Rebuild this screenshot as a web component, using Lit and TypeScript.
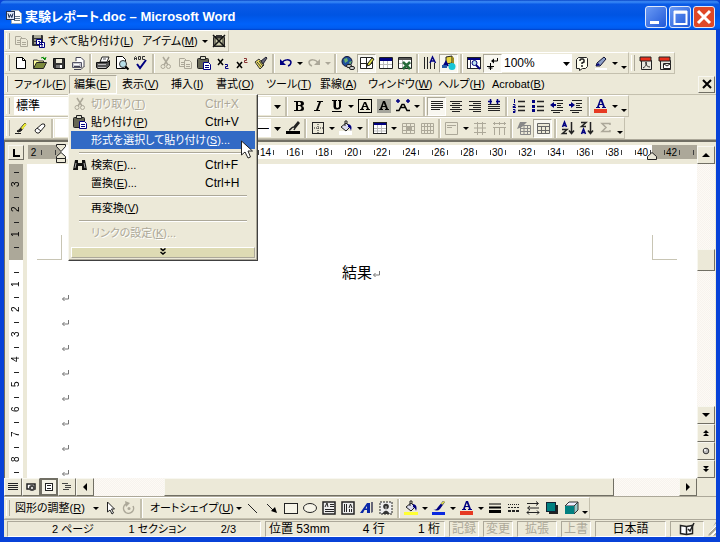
import { LitElement, html, css, svg, nothing, TemplateResult } from "lit";
import { customElement, property } from "lit/decorators.js";
import { classMap } from "lit/directives/class-map.js";
import { styleMap } from "lit/directives/style-map.js";

const G = "#aca899";
const N = "#000080";

/* Glyphs on a 16 x 16 grid */
const icons: Record<string, TemplateResult> = {
  blank: svg``,
  arrow: svg`<path d="M5 7h6l-3 3z" fill="#000"/>`,
  more: svg`<path d="M5 11h6l-3 3z" fill="#000"/>`,
  arrowoff: svg`<path d="M5 7h6l-3 3z" fill="${G}"/>`,
  copy: svg`<g fill="#ece9d8" stroke="${G}"><path d="M2.500 3.500h5l2 2v6h-7z"/><path d="M7.500 5.500h5l2 2v6h-7z"/><path d="M9 9.500h4M9 11.500h4M4 7.500h3M4 9.500h3"/></g>`,
  pasteall: svg`<rect x="2" y="2" width="11" height="11" rx="1" fill="#333"/><path d="M4 2h7v3h-7z" fill="#aa9"/><path d="M4 6h3v2h-3zM4 9h2v2h-2z" fill="#998"/><path d="M6.500 6.500h5v5h-5zM9.500 9.500h5v5h-5z" fill="#fff" stroke="${N}"/><path d="M8 8.500h2M11 11.500h2M11 13h2" stroke="${N}"/>`,
  clear: svg`<rect x="2.500" y="3.500" width="11" height="10" rx="1" fill="#776" stroke="#222"/><path d="M5 2h6v3h-6z" fill="#333"/><rect x="5" y="6" width="6" height="6" fill="#cca"/><path d="M2 2l12 12M14 2l-12 12" stroke="#111" stroke-width="1.500"/>`,
  neu: svg`<path d="M3.500 2.500h6l3 3v8h-9z" fill="#fff" stroke="#000"/><path d="M9.500 2.500v3h3" fill="none" stroke="#000"/>`,
  open: svg`<path d="M1.500 13v-8h4l1 1h5v2" fill="#ffff9c" stroke="#333"/><path d="M1.500 13.500l3-6h10l-3 6z" fill="#7c8a3c" stroke="#222"/><path d="M9 3q3-2 4 1m-2-1l2 2 1-3" fill="none" stroke="#080"/>`,
  save: svg`<path d="M2.500 3.500h11v10h-10l-1-1z" fill="#333" stroke="#111"/><rect x="5" y="4" width="6" height="4" fill="#ece9d8"/><rect x="5" y="10" width="6" height="3" fill="#777"/><rect x="9" y="10" width="2" height="3" fill="#fff"/>`,
  aprint: svg`<path d="M6 6V2.500h5l3 3V12" fill="#fff" stroke="#445"/><path d="M2.500 7.500h9v5h-9z" fill="#c9c9d2" stroke="#556"/><path d="M4 11.500h6M4 14.500h7l3-3" stroke="#445" fill="none"/><path d="M4 9.500h5" stroke="#fff"/>`,
  print: svg`<path d="M5 7l2-5h7l-2 5z" fill="#fff" stroke="#222"/><path d="M1.500 7.500h11l2-2v5l-3 3h-9l-1-1z" fill="#555" stroke="#111"/><path d="M3 9.500h8M3 12.500h8" stroke="#bbb"/><path d="M8 4h3" stroke="#555"/>`,
  preview: svg`<path d="M2.500 1.500h6l3 3v9h-9z" fill="#fff" stroke="#000"/><circle cx="9" cy="9" r="3.500" fill="#b8dfe8" stroke="#333"/><path d="M11.500 11.500l3 3" stroke="#000" stroke-width="2"/>`,
  spell: svg`<path d="M1.500 5V2.500l1-1 1 1V5M1.500 3.500h2M5.500 1.500v3h2v-3zM12 1.500H9.500v3H12" fill="none" stroke="#333"/><path d="M4 9l3 4 6-8" fill="none" stroke="${N}" stroke-width="2"/>`,
  cut: svg`<path d="M5 2l5 8M11 2l-5 8" stroke="${G}" stroke-width="1.500"/><circle cx="5" cy="11.500" r="2" fill="none" stroke="${G}"/><circle cx="10.500" cy="11.500" r="2" fill="none" stroke="${G}"/>`,
  paste: svg`<rect x="1.500" y="3.500" width="11" height="10" rx="1" fill="#665" stroke="#222"/><path d="M4.500 1.500h5v3h-5z" fill="#ddc" stroke="#222"/><path d="M7.500 7.500h5l2 2v5h-7z" fill="#fff" stroke="${N}"/><path d="M9 10.500h4M9 12.500h4" stroke="${N}"/>`,
  sub: svg`<path d="M3 4l5 6M8 4l-5 6" stroke="#000" stroke-width="1.500"/><path d="M10 9.500h2.500v2h-2v2h3" fill="none" stroke="${N}"/>`,
  sup: svg`<path d="M3 7l5 6M8 7l-5 6" stroke="#000" stroke-width="1.500"/><path d="M10 3.500h2.500v2h-2v2h3" fill="none" stroke="#833"/>`,
  brush: svg`<path d="M2 7l4-3 5 6-4 4z" fill="#eee060" stroke="#333"/><path d="M4 7l5 6M6 6l4 5" stroke="#333"/><path d="M8 6l5-4 1 1-4 6z" fill="#667" stroke="#223"/>`,
  undo: svg`<path d="M4 8C6 4 12 4 13 7q0 3-3 4" fill="none" stroke="${N}" stroke-width="1.500"/><path d="M2 4v6h6z" fill="${N}"/>`,
  redo: svg`<path d="M12 8C10 4 4 4 3 7q0 3 3 4" fill="none" stroke="${G}" stroke-width="1.500"/><path d="M14 4v6H8z" fill="${G}"/>`,
  link: svg`<circle cx="7" cy="6.500" r="5" fill="#1f4f9c" stroke="#113"/><path d="M4 4l3-1 1 3-3 2zM9 7l3-1-2 4z" fill="#6db46d"/><rect x="6.500" y="9.500" width="5" height="3" rx="1.500" fill="#ccc" stroke="#222"/><rect x="9.500" y="11.500" width="5" height="3" rx="1.500" fill="#ccc" stroke="#222"/>`,
  tables: svg`<path d="M1.500 2.500h12v11h-12zM7.500 2.500v11M1.500 8.500h12" fill="#fff" stroke="#222"/><path d="M8 11l1-3 4-5 2 1-4 6z" fill="#dd4" stroke="#222"/>`,
  instable: svg`<path d="M1.500 2.500h13v11h-13z" fill="#fff" stroke="#222"/><path d="M2 3h12v3h-12z" fill="${N}"/><path d="M5.500 6v7M9.500 6v7M2 9.500h12" stroke="#bbb"/>`,
  excel: svg`<path d="M1.500 2.500h13v11h-13z" fill="#fff" stroke="#222"/><path d="M2 3h12v2h-12z" fill="#555"/><path d="M5.500 5v8M2 8.500h12" stroke="#bbb"/><path d="M6 7l7 7M13 7l-7 7" stroke="#276b3a" stroke-width="2.500"/>`,
  columns: svg`<path d="M2.500 2v12M5.500 2v12M8.500 8v6M12.500 8v6" stroke="#222"/><path d="M8 8l2.500-6 3 6M9 6h4" fill="none" stroke="${N}" stroke-width="1.500"/>`,
  drawing: svg`<path d="M5 2l6-1v7l-6 1z" fill="#e8d640" stroke="#222"/><path d="M11 1l2 2v7l-2-2z" fill="#998a20"/><path d="M1 12l4-7 3 6z" fill="${N}"/><rect x="1" y="10" width="5" height="3" fill="#265aa8"/><circle cx="11" cy="11.500" r="3.500" fill="#16c6d6"/>`,
  docmap: svg`<rect x="1.500" y="2.500" width="13" height="11" fill="#fff" stroke="#222"/><rect x="2" y="3" width="12" height="2" fill="${N}"/><path d="M4.500 5v8" stroke="#336"/><circle cx="8.500" cy="8" r="2.500" fill="#bfe3ee" stroke="${N}"/><path d="M10 10l4 4" stroke="${N}" stroke-width="2"/>`,
  para: svg`<path d="M12.500 3v3h-5" fill="none" stroke="#000"/><path d="M9 3.500v5L6 6z" fill="#000"/><path d="M5.500 8v7M2 11.500h7M3.500 13h4" stroke="#000"/>`,
  help: svg`<path d="M2.500 4.500l2-2h8l1 1v8l-2 2h-3l-3 2v-2h-3z" fill="#fffff0" stroke="#222"/><path d="M6 6V5l1-1h2l1 1v2L8 8v1M8 10v2" fill="none" stroke="#222" stroke-width="1.500"/>`,
  pen: svg`<path d="M2 13h12v2h-12z" fill="#fff"/><path d="M3 11l1-3 7-6 2 2-6 7z" fill="#8ca0c8" stroke="#113"/><path d="M3 11l2-3 2 2z" fill="${N}"/>`,
  pdf: svg`<path d="M3.500 5.500h10v9h-10z" fill="#e8e8e0" stroke="#222"/><path d="M2 2h11v4h-11z" fill="#e8301c" stroke="#222"/><path d="M5 13c4-2 4-6 3-6s0 5 4 5" fill="none" stroke="#222"/>`,
  pdfmail: svg`<path d="M3.500 5.500h10v9h-10z" fill="#e8e8e0" stroke="#222"/><path d="M2 2h11v4h-11z" fill="#e8301c" stroke="#222"/><path d="M6.500 8.500h7v5h-7zM7 9l3 2 3-2" fill="#fff" stroke="#222"/>`,
  bold: svg`<path fill-rule="evenodd" d="M3 3h7q3 0 3 3 0 1-2 2 2 0 2 2.500Q13 13 10 13H3v-1h2V4H3zM7 4v3h2q2-1 0-3zM7 8v4h2q3-2 0-4z" fill="#000"/>`,
  italic: svg`<path d="M7 3h6v1h-2l-3 8h2v1H4v-1h2l3-8H7z" fill="#000"/>`,
  underline: svg`<path d="M3 2h5v1H7v6q1 2 3 0V3H9V2h4v1h-1v6q-1 3-4 2.500Q5 12 4.500 9V3H3zM3 13h10v1H3z" fill="#000"/>`,
  boxa: svg`<rect x="1.500" y="1.500" width="13" height="13" fill="none" stroke="#000"/><path fill-rule="evenodd" d="M7 4h2l3 7h1v1H9v-1h1l-.6-2H6.400L6 11h1v1H3v-1h1zM7.800 5.500L6.700 8h2.300z" fill="#000"/>`,
  shadea: svg`<rect x="1" y="1" width="14" height="14" fill="#a5a59c"/><path fill-rule="evenodd" d="M7 3h2l3 8h1v1H9v-1h1l-.6-2H6.400L6 11h1v1H3v-1h1zM7.800 5L6.700 8h2.300z" fill="#000"/>`,
  scalea: svg`<path d="M1 12.500h3l3-6h2l3 6h3M5 9.500h6" fill="none" stroke="#000" stroke-width="1.500"/><path d="M1 3h4M3 1v4M11 3h4M13 1v4" stroke="${N}" stroke-width="1.500"/>`,
  left: svg`<path d="M2 3.500h12M2 5.500h12M2 7.500h12M2 9.500h12M2 11.500h9" stroke="#222"/>`,
  center: svg`<path d="M2 3.500h12M4 5.500h8M2 7.500h12M4 9.500h8M2 11.500h12M4 13.500h8" stroke="#222"/>`,
  right: svg`<path d="M2 3.500h12M6 5.500h8M2 7.500h12M6 9.500h8M2 11.500h12M6 13.500h8" stroke="#222"/>`,
  distribute: svg`<path d="M2 6.500h12M2 8.500h12M2 10.500h12M2 12.500h12" stroke="#222"/><path d="M2 3.500h4M10 3.500h4M4.500 1v5M11.500 1v5" stroke="${N}" stroke-width="1.500"/>`,
  numlist: svg`<path d="M7 3.500h7M7 8.500h7M7 12.500h7" stroke="#222" stroke-width="1.500"/><path d="M3.500 1v4M2 6.500h2v2h-2v1h3M2 11.500h2v3h-2M2 13.500h2" fill="none" stroke="${N}"/>`,
  bullets: svg`<path d="M7 3.500h7M7 8.500h7M7 12.500h7" stroke="#222" stroke-width="1.500"/><path d="M2 2h3v3H2zM2 7h3v3H2zM2 11h3v3H2z" fill="${N}"/>`,
  outdent: svg`<path d="M4 2.500h10M8 5.500h6M8 7.500h4M8 9.500h6M2 12.500h12M4 14.500h7" stroke="#222"/><path d="M1 7l4-3v2h2v2H5v2z" fill="${N}"/>`,
  indent: svg`<path d="M4 2.500h10M8 5.500h6M8 7.500h4M8 9.500h6M2 12.500h12M4 14.500h7" stroke="#222"/><path d="M7 7L3 4v2H1v2h2v2z" fill="${N}"/>`,
  fontcolor: svg`<rect x="1" y="11" width="13" height="4" fill="#e63a22"/><path fill-rule="evenodd" d="M7 1h2l3 8h1v1H9V9h1l-.6-2H6.400L6 9h1v1H3V9h1zM7.800 3L6.700 6h2.300z" fill="${N}"/>`,
  pencil: svg`<path d="M2 13.500h6M4 11l2-1 6-7 1 1-5 7-3 1z" fill="#222" stroke="#222"/><path d="M8 8l4-5 1.500 1.500-4 5z" fill="#ee3"/>`,
  eraser: svg`<path d="M3 10l7-6q3-1 3 2l-6 7H5q-2-1-2-3zM5 8l4 3" fill="#fff" stroke="#222"/>`,
  pencolor: svg`<rect x="1" y="11" width="14" height="3" fill="#000"/><path d="M4 10c2 0 2-3 5-3l4-5 1 1-4 5-1 2" fill="none" stroke="#222" stroke-width="1.500"/>`,
  borders: svg`<rect x="2.500" y="2.500" width="11" height="11" fill="none" stroke="#222"/><path d="M8 4v9M4 8h9" stroke="#222" stroke-dasharray="1 1"/>`,
  fill: svg`<rect x="1" y="11" width="13" height="4" fill="#fff"/><path d="M3 7l5-4 4 4-4 4z" fill="#dde" stroke="#222"/><path d="M7 6V1h2v3" fill="none" stroke="#222"/><path d="M10 4q5 1 3 7-1-4-3-4z" fill="${N}"/>`,
  fillyel: svg`<rect x="1" y="12" width="14" height="3" fill="#ff3"/><path d="M3 7l5-4 4 4-4 4z" fill="#dde" stroke="#222"/><path d="M7 6V1h2v3" fill="none" stroke="#222"/><path d="M10 4q5 1 3 7-1-4-3-4z" fill="${N}"/>`,
  linecolor: svg`<rect x="1" y="12" width="13" height="3" fill="#0a28e0"/><path d="M2 9q3 2 5-2l5-6 2 1-5 7q-3 3-7 0z" fill="${N}"/><path d="M10 3l3-2 1 1-3 3z" fill="#dd4"/>`,
  table: svg`<rect x="1.500" y="2.500" width="13" height="11" fill="#fff" stroke="#222"/><rect x="2" y="3" width="12" height="2" fill="${N}"/><path d="M5.500 5v8M9.500 5v8M2 8.500h12M2 11h12" stroke="#bbb"/>`,
  merge: svg`<path d="M2.500 3.500h12v10h-12zM6.500 3.500v10M10.500 3.500v10M2.500 6.500h12M2.500 10.500h12" fill="none" stroke="${G}"/><rect x="6" y="6" width="6" height="5" fill="${G}"/>`,
  split: svg`<path d="M2.500 3.500h12v10h-12zM5.500 3.500v10M8.500 3.500v10M11.500 3.500v10M2.500 6.500h12M2.500 10.500h12" fill="none" stroke="${G}"/>`,
  cellalign: svg`<path d="M1.500 2.500h12v12h-12zM3 5.500h9M3 7.500h5" fill="none" stroke="${G}"/>`,
  rows: svg`<path d="M2 3.500h12M2 12.500h12M5.500 2v13M10.500 2v13M2 8h12" stroke="${G}"/>`,
  cols: svg`<path d="M3.500 2v3M8.500 2v3M13.500 2v3M2 7.500h13M3.500 7v8M8.500 7v8M13.500 7v8M2 3.500h13" stroke="${G}"/>`,
  autofmt: svg`<path d="M4.500 5.500h10v9h-10zM4.500 8.500h10M4.500 11.500h10M8 5.500v9M11.500 5.500v9" fill="none" stroke="#888"/><path d="M1 9l3-7h7l-5 5z" fill="#888"/>`,
  grid: svg`<path d="M2.500 3.500h12v10h-12zM2.500 6.500h12M2.500 10.500h12M6.500 6.500v7M10.500 6.500v7" fill="#ece9d8" stroke="#666"/>`,
  az: svg`<path d="M2.500 7l2-5 2 5M3 5.500h3" fill="none" stroke="${N}" stroke-width="1.500"/><path d="M2 9.500h5l-4.500 4H7" fill="none" stroke="#222" stroke-width="1.500"/><path d="M11.500 2v11M9 10.500l2.500 3 2.500-3" fill="none" stroke="#222" stroke-width="1.500"/>`,
  za: svg`<path d="M2.500 14l2-5 2 5M3 12.500h3" fill="none" stroke="${N}" stroke-width="1.500"/><path d="M2 2.500h5l-4.500 4H7" fill="none" stroke="#222" stroke-width="1.500"/><path d="M11.500 2v11M9 10.500l2.500 3 2.500-3" fill="none" stroke="#222" stroke-width="1.500"/>`,
  sum: svg`<path d="M12 5V3.500H4l4 4-4 4h8V10" fill="none" stroke="${G}" stroke-width="1.500"/>`,
  pointer: svg`<path d="M5.500 2v10l2.500-2 2 4 1.500-1-2-4h3z" fill="#fff" stroke="#222"/>`,
  rotate: svg`<path d="M5 4a5 5 0 1 0 7 2" fill="none" stroke="${G}" stroke-width="1.500"/><path d="M4 1l5 2-4 4z" fill="${G}"/><circle cx="8" cy="8.500" r="1.500" fill="${G}"/>`,
  line: svg`<path d="M3 4l9 9" stroke="#222"/>`,
  arrowline: svg`<path d="M3 4l6 6" stroke="#222"/><path d="M13 13l-2-6-4 4z" fill="#000"/>`,
  rect: svg`<rect x="1.500" y="3.500" width="13" height="10" fill="#f6f4e8" stroke="#222"/>`,
  oval: svg`<ellipse cx="8" cy="8" rx="6.500" ry="4.500" fill="#f6f4e8" stroke="#222"/>`,
  textbox: svg`<rect x="2" y="2" width="12" height="12" fill="#eee" stroke="#222" stroke-width="1.500"/><path d="M4 7l2-4 1 4M9 4.500h4M9 6.500h4M4 9.500h9M4 11.500h9" fill="none" stroke="#222"/>`,
  vtextbox: svg`<rect x="2" y="2" width="12" height="12" fill="#eee" stroke="#222" stroke-width="1.500"/><path d="M4.500 4v8M6.500 4v8M9 8l1.500-4L12 8M9.500 9v3M11.500 9v3" fill="none" stroke="#222"/>`,
  wordart: svg`<path fill-rule="evenodd" d="M1 13l7-10h3v10H8v-3H5.500L4 13zM8 6L6.500 8.500H8z" fill="#0a28a8"/><path d="M12 2h2v10l-2 1z" fill="#667"/>`,
  clipart: svg`<rect x="2" y="2" width="12" height="12" fill="#eee" stroke="#222" stroke-dasharray="2 1"/><circle cx="8" cy="6.500" r="2.800" fill="#333"/><path d="M4 14q4-7 8 0z" fill="#333"/><path d="M8 6v5" stroke="#ccc"/>`,
  thick: svg`<path d="M2 4h12" stroke="#000"/><path d="M2 7.500h12" stroke="#000" stroke-width="2"/><path d="M2 11.500h12" stroke="#000" stroke-width="3"/>`,
  dash: svg`<path d="M2 4.500h12" stroke="#222" stroke-dasharray="1 1"/><path d="M2 7.500h12" stroke="#222" stroke-dasharray="2 1"/><path d="M2 11h12" stroke="#222" stroke-width="2" stroke-dasharray="3 1"/>`,
  arrows: svg`<path d="M2 3.500h11M11 1.500l2.500 2-2.500 2M14 8h-11M5 6l-2.500 2L5 10M2 12.500h12M12 10.500l2 2-2 2M4 10.500l-2 2 2 2" fill="none" stroke="#222"/>`,
  shadow: svg`<rect x="5" y="5" width="9" height="9" fill="#222"/><rect x="2.500" y="2.500" width="9" height="9" fill="#008080" stroke="#123"/>`,
  cube: svg`<path d="M2 6l4-4h9l-4 4z" fill="#eef" stroke="#333"/><path d="M11 6l4-4v8l-4 4z" fill="#9cc" stroke="#333"/><rect x="2" y="6" width="9" height="8" fill="#008080"/>`,
  binoc: svg`<path d="M3 3h3v3h4V3h3l2 10h-5V9H6v4H1z" fill="#111"/><path d="M4 6l-1 5M12 6l1 5" stroke="#aaa"/>`,
  vnormal: svg`<path d="M3 4.500h10M3 6.500h10M3 8.500h10M3 10.500h10" stroke="#222"/>`,
  vweb: svg`<path d="M4 5h8v5H4z" fill="#fff" stroke="#222" stroke-width="1.500"/><circle cx="9" cy="9" r="3" fill="#444"/><circle cx="9" cy="9" r="1" fill="#fff"/>`,
  vprint: svg`<rect x="4.500" y="4.500" width="7" height="7" fill="#fff" stroke="#222"/><path d="M6 6.500h4M6 9.500h4" stroke="#222"/>`,
  voutline: svg`<path d="M3 4.500h6M6 6.500h6M6 8.500h6M4 10.500h6" stroke="#444"/>`,
  tleft: svg`<path d="M10 4v8L6 8z" fill="#000"/>`,
  tright: svg`<path d="M6 4v8l4-4z" fill="#000"/>`,
  tup: svg`<path d="M4 10h8L8 6z" fill="#000"/>`,
  tdown: svg`<path d="M4 6h8l-4 4z" fill="#000"/>`,
  dup: svg`<path d="M5 8l3-3 3 3zM5 11l3-3 3 3z" fill="#000"/>`,
  ddown: svg`<path d="M5 5h6L8 8zM5 8h6l-3 3z" fill="#000"/>`,
  ball: svg`<circle cx="8" cy="8" r="2.800" fill="#bbb" stroke="#333"/><circle cx="7" cy="7" r="1" fill="#fff"/>`,
  chev: svg`<path d="M5.500 4.500l2.500 2 2.500-2M5.500 8l2.500 2 2.500-2" fill="none" stroke="#000" stroke-width="1.500"/>`,
  close: svg`<path d="M4 4l8 8M12 4l-8 8" stroke="#000" stroke-width="2"/>`,
  tabstop: svg`<path d="M6 4v7h6" fill="none" stroke="#000" stroke-width="2"/>`,
  ret: svg`<path d="M11.500 5v4h-6M7.500 7l-2 2 2 2" fill="none" stroke="#777"/>`,
  book: svg`<path d="M1.500 4.500l6 1 6-1v8l-6 1-6-1z" fill="#fff" stroke="#222" stroke-width="1.500"/><path d="M7.500 5v8" stroke="#222" stroke-width="1.500"/><path d="M9 8l2 2 4-8" fill="none" stroke="#222" stroke-width="1.500"/>`,
  word: svg`<path d="M5.500 1.500h7l3 3v10h-10z" fill="#fff" stroke="#9ab"/><path d="M8 7.500h6M8 9.500h6M8 11.500h6" stroke="#678"/><rect x="0.500" y="2.500" width="8" height="8" fill="#dfe8f8" stroke="#235"/><path d="M2 4.500l1.200 4 1.300-3 1.300 3L7 4.500" fill="none" stroke="#124"/>`,
};

const glyph = (name: string) =>
  html`<svg class="ico" viewBox="0 0 16 16" aria-hidden="true">${icons[name]}</svg>`;

const keyed = (text: string, key: string, tail = "") => html`${text}(<u>${key}</u>)${tail}`;

const sheet = css`
  * { box-sizing: border-box; }
  button, select {
    font: inherit; color: inherit; margin: 0; padding: 0;
    border: 0; background: none; border-radius: 0; appearance: none;
  }
  .ico { display: block; width: 16px; height: 16px; flex: none; }
`;

/* A row of tool glyphs. "|" draws a rule, "*" before a name marks it pressed. */
@customElement("tool-strip")
export class ToolStrip extends LitElement {
  @property() items = "";
  static styles = [sheet, css`
    :host { display: flex; align-items: center; height: 100%; }
    .btn { width: 19px; height: 19px; display: flex; align-items: center; justify-content: center; flex: none; }
    .narrow { width: 9px; overflow: hidden; }
    .pressed { background: #f8f7f0; border: 1px solid; border-color: #aca899 #fff #fff #aca899; }
    .rule { width: 6px; height: 19px; flex: none; display: flex; justify-content: center; }
    .rule::before { content: ""; width: 2px; background: #c4c0ae; border-right: 1px solid #fff; }
  `];
  render() {
    return this.items.split(" ").map((raw) => {
      if (raw === "|") return html`<span class="rule"></span>`;
      const pressed = raw.startsWith("*");
      const name = pressed ? raw.slice(1) : raw;
      const narrow = ["arrow", "arrowoff", "more"].includes(name);
      return html`<button class=${classMap({ btn: true, narrow, pressed })} aria-label=${name}>${glyph(name)}</button>`;
    });
  }
}

interface Entry { icon?: string; text: string; key: string; tail?: string; shortcut?: string; off?: boolean; hot?: boolean; }

const editMenu: (Entry | null)[] = [
  { icon: "cut", text: "切り取り", key: "T", shortcut: "Ctrl+X", off: true },
  { icon: "paste", text: "貼り付け", key: "P", shortcut: "Ctrl+V" },
  { text: "形式を選択して貼り付け", key: "S", tail: "...", hot: true },
  null,
  { icon: "binoc", text: "検索", key: "F", tail: "...", shortcut: "Ctrl+F" },
  { text: "置換", key: "E", tail: "...", shortcut: "Ctrl+H" },
  null,
  { text: "再変換", key: "V" },
  null,
  { text: "リンクの設定", key: "K", tail: "...", off: true },
];

@customElement("edit-menu")
export class EditMenu extends LitElement {
  static styles = [sheet, css`
    :host {
      display: block; width: 190px; padding: 0 2px 2px 2px; background: #ece9d8; color: #000;
      border: 1px solid; border-color: #f8f7f0 #404040 #404040 #f8f7f0;
      box-shadow: inset -1px -1px #aca899;
    }
    .entry { display: flex; align-items: center; width: 100%; height: 18px; white-space: nowrap; text-align: left; }
    .pic { width: 17px; display: flex; justify-content: center; margin-right: 3px; flex: none; }
    .name { flex: 1; }
    .short { width: 50px; flex: none; font-size: 12px; }
    .off { color: #aca899; text-shadow: 1px 1px #fff; }
    .hot { background: #316ac5; color: #fff; }
    hr { height: 2px; margin: 3px 8px 2px; border: 0; border-top: 1px solid #aca899; border-bottom: 1px solid #fff; }
    .expand { display: flex; justify-content: center; align-items: center; width: 100%; height: 11px; margin-top: 5px; background: #dedbb4; overflow: hidden; border: 1px solid; border-color: #fff #aca899 #aca899 #fff; }
  `];
  render() {
    return html`${editMenu.map((e) => e
      ? html`<button class=${classMap({ entry: true, off: !!e.off, hot: !!e.hot })} role="menuitem">
          <span class="pic">${e.icon ? glyph(e.icon) : nothing}</span>
          <span class="name">${keyed(e.text, e.key, e.tail)}</span>
          ${e.shortcut ? html`<span class="short">${e.shortcut}</span>` : nothing}
        </button>`
      : html`<hr>`)}
      <button class="expand" aria-label="expand">${glyph("chev")}</button>`;
  }
}

const menus: [string, string, number][] = [
  ["ファイル", "F", 60], ["編集", "E", 48], ["表示", "V", 49], ["挿入", "I", 45], ["書式", "O", 50],
  ["ツール", "T", 54], ["罫線", "A", 48], ["ウィンドウ", "W", 70], ["ヘルプ", "H", 54], ["Acrobat", "B", 67],
];

@customElement("app-root")
export class AppRoot extends LitElement {
  static styles = [sheet, css`
    :host {
      display: flex; flex-direction: column; box-sizing: border-box; height: 100vh; overflow: hidden; position: relative;
      font: 12px/16px "Liberation Sans", "Noto Sans CJK JP", sans-serif;
      font-feature-settings: "palt"; color: #000; background: #0842d8;
      padding: 0 4px 5px; white-space: nowrap;
    }
    .title {
      display: flex; align-items: center; height: 30px; margin: 0 -4px; padding: 3px 5px 0 6px; flex: none;
      color: #fff; font-size: 13px; font-weight: 700; border-radius: 6px 6px 0 0;
      background: linear-gradient(#0a46c8 0, #3c8cf8 6%, #0a5ae6 14%, #0054e3 50%, #0062fa 80%, #005cf0 94%, #0040c8 100%);
    }
    .title .cap { flex: 1; margin-left: 3px; }
    .win { width: 22px; height: 22px; margin-left: 2px; border: 1px solid #dfe8fa; border-radius: 3px; background: linear-gradient(135deg, #6a9af4, #2058d8); display: block; }
    .shut { background: #e04828; }
    .win svg { display: block; width: 20px; height: 20px; }
    .dock { background: #ece9d8; flex: none; border-bottom: 1px solid #aca899; }
    .line { display: flex; height: 22px; }
    .bar { display: flex; align-items: center; height: 22px; border: 1px solid; border-color: #fff #c4c0ae #c4c0ae transparent; flex: none; }
    .bar::before { content: ""; width: 2px; height: 16px; margin: 0 1px; border-left: 1px solid #fff; border-right: 1px solid #aca899; flex: none; }
    .text { display: flex; align-items: center; height: 19px; font-size: 11px; }
    .paste { width: 112px; gap: 2px; }
    .item { width: 58px; }
    .adjust { width: 80px; padding-left: 4px; }
    .shape { width: 90px; padding-left: 6px; }
    .menubar { display: flex; align-items: center; height: 21px; padding-right: 1px; border-bottom: 1px solid #c4c0ae; font-size: 11px; }
    .grip { width: 2px; height: 16px; margin: 0 1px 0 2px; border-left: 1px solid #fff; border-right: 1px solid #aca899; }
    .menu { position: relative; height: 19px; }
    .menu > button { width: 100%; height: 19px; padding: 0 4px; border: 1px solid transparent; text-align: left; }
    .menu > .down { border-color: #aca899 #fff #fff #aca899; }
    .pop { position: absolute; left: -1px; top: 19px; z-index: 2; }
    .mouse { position: absolute; left: 171px; top: 65px; z-index: 3; width: 14px; height: 20px; }
    .spring { flex: 1; }
    .raised { display: flex; align-items: center; justify-content: center; background: #ece9d8; border: 1px solid; border-color: #f8f7f0 #716f64 #716f64 #f8f7f0; flex: none; overflow: hidden; }
    .x { width: 17px; height: 17px; }
    .combo { display: flex; height: 18px; background: #fff; flex: none; overflow: hidden; }
    .combo select { flex: 1; min-width: 0; padding: 0 2px; display: block; }
    .combo .ico { width: 12px; height: 18px; background: #ece9d8; }
    .zoom { width: 70px; }
    .zoom .ico { background: #fff; }
    .style { width: 108px; margin-left: 3px; }
    .font { width: 92px; margin: 0 4px; }
    .size { width: 61px; }
    .weight { width: 228px; }
    .weight select { text-align-last: right; }

    .work { display: grid; grid-template-columns: minmax(0, 1fr) 18px; grid-template-rows: minmax(0, 1fr); flex: 1; min-height: 0; overflow: hidden; background: #ece9d8; border-top: 2px solid #716f64; padding-right: 1px; }
    .left { display: flex; flex-direction: column; min-width: 0; min-height: 0; border-left: 1px solid #716f64; }
    .hruler { display: flex; height: 22px; padding: 3px 0 0 3px; flex: none; position: relative; }
    .tab { width: 16px; height: 15px; margin-right: 4px; }
    .scale { flex: 1; min-width: 0; height: 14px; overflow: hidden; background: linear-gradient(90deg, #aca899 33px, #fff 33px, #fff 624px, #aca899 624px); }
    .marks { display: flex; margin-left: -9px; width: 100%; }
    .mark { width: 29px; flex: none; display: flex; justify-content: center; align-items: center; height: 14px; font-size: 10px; }
    .num { width: 16px; display: flex; justify-content: center; border: solid #404040; border-width: 0 1px; height: 5px; line-height: 5px; flex: none; }
    .tri { position: absolute; top: 2px; width: 10px; height: 20px; z-index: 1; }
    .first { left: 51px; }
    .last { left: 642px; }
    .body { display: flex; flex: 1; min-height: 0; }
    .vruler { width: 14px; margin: 0 4px; display: flex; flex-direction: column; align-items: center; padding-top: 8px; background: linear-gradient(#aca899 96px, #fff 96px); font-size: 10px; overflow: hidden; }
    .vcell { height: 25px; display: flex; flex-direction: column; align-items: center; flex: none; }
    .vcell::before { content: ""; width: 5px; height: 1px; background: #222; flex: none; }
    .vnum { height: 23px; width: 14px; line-height: 14px; writing-mode: vertical-rl; transform: rotate(180deg); text-align: center; }
    .page { flex: 1; background: #fff; padding: 71px 20px 0 10px; min-width: 0; }
    .corners { display: flex; justify-content: space-between; }
    .corner { width: 25px; height: 25px; border: solid #c8c5b4; }
    .cl { border-width: 0 1px 1px 0; }
    .cr { border-width: 0 0 1px 1px; }
    .row { height: 25px; display: flex; align-items: center; padding-left: 20px; }
    .head { justify-content: center; font-size: 15px; padding: 0 0 0 12px; }
    .head .ico { margin: 2px 0 0 -4px; }
    .side { display: flex; flex-direction: column; min-height: 0; }
    .track { background: repeating-conic-gradient(#f7f3ee 0 25%, #fdfaf5 0 50%) 0 0 / 2px 2px; }
    .side .track { flex: 1; padding-top: 85px; }
    .slit { height: 4px; }
    .sq { width: 18px; height: 18px; }
    .vthumb { height: 22px; }
    .foot { display: flex; height: 18px; background: #ece9d8; padding-right: 1px; flex: none; }
    .foot .down { border: 2px solid #716f64; background: #f4f2e6; }
    .hleft { width: 70px; flex: none; }
    .hthumb { flex: 1; height: 18px; }
    .hright { width: 65px; flex: none; }
    .corner-box { width: 18px; background: #ece9d8; }
    .draw { background: #ece9d8; border-top: 1px solid #aca899; height: 23px; flex: none; }
    .status { display: flex; align-items: center; height: 18px; background: #ece9d8; border-top: 1px solid #aca899; padding-left: 3px; flex: none; }
    .cell { display: flex; align-items: center; height: 16px; border: 1px solid; border-color: #aca899 #fff #fff #aca899; margin-right: 4px; flex: none; }
    .where { width: 254px; padding: 0 24px 0 44px; justify-content: space-between; font-size: 11px; }
    .at { width: 180px; padding: 0 4px 0 3px; justify-content: space-between; }
    .flag { width: 30px; justify-content: center; color: #aca899; }
    .wide { width: 40px; }
    .lang { width: 71px; justify-content: center; }
    .proof { width: 34px; justify-content: center; }
    .resize { width: 12px; height: 14px; background: repeating-linear-gradient(135deg, #fff 0 1px, #aca899 1px 3px, #ece9d8 3px 4px); clip-path: polygon(100% 0, 100% 100%, 0 100%); }
  `];

  combo(cls: string, label: string, value: string) {
    return html`<span class="combo ${cls}"><select aria-label=${label}><option>${value}</option></select>
      <svg class="ico" viewBox="0 0 12 18" aria-hidden="true"><path d="M3 8h7l-3.500 4z" fill="#000"/></svg></span>`;
  }

  render() {
    const marks = Array.from({ length: 24 }, (_, i) => (i === 0 ? "2" : i === 1 || i === 23 ? "" : String((i - 1) * 2)));
    const vmarks = ["3", "2", "1", "", "1", "2", "3", "4", "5", "6", "7", "8", ""];
    return html`
      <header class="title">
        ${glyph("word")}<span class="cap">実験レポート.doc – Microsoft Word</span>
        <button class="win" aria-label="最小化"><svg viewBox="0 0 20 20"><path d="M4 14h9v3H4z" fill="#fff"/></svg></button>
        <button class="win" aria-label="最大化"><svg viewBox="0 0 20 20"><path d="M4 5.500h13M4.500 4v13h12V4" fill="none" stroke="#fff" stroke-width="2"/><path d="M4 5h13" stroke="#fff" stroke-width="3"/></svg></button>
        <button class="win shut" aria-label="閉じる"><svg viewBox="0 0 20 20"><path d="M4 4l12 12M16 4L4 16" stroke="#fff" stroke-width="3"/></svg></button>
      </header>

      <div class="dock">
        <div class="line"><div class="bar">
          <tool-strip items="copy"></tool-strip>
          <button class="text paste">${glyph("pasteall")}<span>${keyed("すべて貼り付け", "L")}</span></button>
          <button class="text item">${keyed("アイテム", "M")}</button>
          <tool-strip items="arrow clear"></tool-strip>
        </div></div>
        <div class="line">
          <div class="bar">
            <tool-strip items="neu open save aprint | print preview spell | cut copy paste sub sup brush | undo arrow redo arrowoff | link *tables instable excel | columns *drawing | docmap *para"></tool-strip>
            ${this.combo("zoom", "ズーム", "100%")}
            <tool-strip items="help pen arrow more"></tool-strip>
          </div>
          <div class="bar"><tool-strip items="pdf pdfmail"></tool-strip></div>
        </div>
        <nav class="menubar">
          <span class="grip"></span>
          ${menus.map(([t, k, w]) => html`<div class="menu" style=${styleMap({ width: `${w}px` })}>
            <button class=${classMap({ down: k === "E" })}>${keyed(t, k)}</button>
            ${k === "E" ? html`<edit-menu class="pop" role="menu"></edit-menu>
              <svg class="mouse" viewBox="0 0 14 20" aria-hidden="true"><path d="M1.500 1v14l3.500-3 3 6 2.500-1-2.500-6h4.500z" fill="#fff" stroke="#222"/></svg>` : nothing}
          </div>`)}
          <span class="spring"></span>
          <button class="raised x" aria-label="文書を閉じる">${glyph("close")}</button>
        </nav>
        <div class="line"><div class="bar">
          ${this.combo("style", "スタイル", "標準")}${this.combo("font", "フォント", "")}${this.combo("size", "サイズ", "")}
          <tool-strip items="| bold italic underline arrow boxa shadea scalea arrow | *left center right distribute | numlist bullets outdent indent | fontcolor arrow more"></tool-strip>
        </div></div>
        <div class="line"><div class="bar">
          <tool-strip items="pencil eraser |"></tool-strip>
          ${this.combo("weight", "線の太さ", "―")}
          <tool-strip items="pencolor | borders arrow fill arrow | table arrow merge split | cellalign arrow rows cols | autofmt *grid | az za sum more"></tool-strip>
        </div></div>
      </div>

      <main class="work">
        <div class="left">
          <div class="hruler">
            <button class="raised tab" aria-label="タブ">${glyph("tabstop")}</button>
            <div class="scale"><div class="marks">${marks.map((m) => html`<span class="mark"><span class="num">${m}</span></span>`)}</div></div>
            <svg class="tri first" viewBox="0 0 10 20" aria-hidden="true"><path d="M.500 .500h9v2L5 7.500.500 2.500zM5 8.500l4.500 4v2h-9v-2zM.500 14.500h9v4h-9z" fill="#ece9d8" stroke="#222"/></svg>
            <svg class="tri last" viewBox="0 0 10 20" aria-hidden="true"><path d="M5 8.500l4.500 4v3h-9v-3z" fill="#ece9d8" stroke="#222"/></svg>
          </div>
          <div class="body">
            <div class="vruler">${vmarks.map((m) => html`<span class="vcell"><span class="vnum">${m}</span></span>`)}</div>
            <article class="page">
              <div class="corners"><span class="corner cl"></span><span class="corner cr"></span></div>
              <div class="row head">結果${glyph("ret")}</div>
              ${Array.from({ length: 8 }, () => html`<div class="row">${glyph("ret")}</div>`)}
            </article>
          </div>
        </div>
        <div class="side">
          <span class="slit"></span>
          <button class="raised sq" aria-label="上へ">${glyph("tup")}</button>
          <div class="track"><div class="raised vthumb"></div></div>
          <button class="raised sq" aria-label="下へ">${glyph("tdown")}</button>
          <button class="raised sq" aria-label="前のページ">${glyph("dup")}</button>
          <button class="raised sq" aria-label="ブラウズの対象">${glyph("ball")}</button>
          <button class="raised sq" aria-label="次のページ">${glyph("ddown")}</button>
        </div>
      </main>
      <div class="foot">
        <button class="raised sq" aria-label="下書き">${glyph("vnormal")}</button>
        <button class="raised sq" aria-label="Web">${glyph("vweb")}</button>
        <button class="raised sq down" aria-label="印刷レイアウト">${glyph("vprint")}</button>
        <button class="raised sq" aria-label="アウトライン">${glyph("voutline")}</button>
        <button class="raised sq" aria-label="左へ">${glyph("tleft")}</button>
        <span class="track hleft"></span><span class="raised hthumb"></span><span class="track hright"></span>
        <button class="raised sq" aria-label="右へ">${glyph("tright")}</button>
        <span class="corner-box"></span>
      </div>
      <div class="draw line"><div class="bar">
        <button class="text adjust">${keyed("図形の調整", "R")}</button>
        <tool-strip items="arrow pointer rotate |"></tool-strip>
        <button class="text shape">${keyed("オートシェイプ", "U")}</button>
        <tool-strip items="arrow line arrowline rect oval textbox vtextbox wordart clipart | fillyel arrow linecolor arrow fontcolor arrow thick dash arrows shadow cube more"></tool-strip>
      </div></div>
      <footer class="status">
        <div class="cell where"><span>2 ページ</span><span>1 セクション</span><span>2/3</span></div>
        <div class="cell at"><span>位置 53mm</span><span class="spring"></span><span>4 行</span><span class="spring"></span><span>1 桁</span></div>
        <div class="cell flag">記録</div><div class="cell flag">変更</div><div class="cell flag wide">拡張</div><div class="cell flag">上書</div>
        <div class="cell lang">日本語</div><div class="cell proof">${glyph("book")}</div>
        <span class="spring"></span><span class="resize"></span>
      </footer>`;
  }
}
